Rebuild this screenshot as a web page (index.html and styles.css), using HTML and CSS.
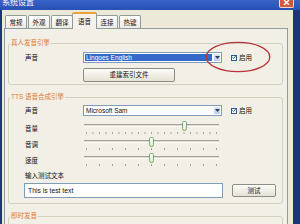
FILE: index.html
```html
<!DOCTYPE html>
<html lang="zh-CN">
<head>
<meta charset="utf-8">
<title>系统设置</title>
<link rel="stylesheet" href="styles.css">
</head>
<body>
<div class="titlebar">
  <span class="title">系统设置</span>
  <span class="close"><svg width="7" height="5" viewBox="0 0 7 5"><path d="M1 0 L6 5 M6 0 L1 5" stroke="#fff" stroke-width="1.4"/></svg></span>
</div>
<div class="frame">
  <div class="tabs">
    <div class="tab">常规</div>
    <div class="tab">外观</div>
    <div class="tab">翻译</div>
    <div class="tab active">语音</div>
    <div class="tab">连接</div>
    <div class="tab">热键</div>
  </div>
  <div class="panel">
    <fieldset class="group g1">
      <legend>真人发音引擎</legend>
      <div class="row">
        <span class="lbl">声音</span>
        <div class="combo sel"><span class="val">Lingoes English</span><span class="drop"><svg width="5" height="3" viewBox="0 0 5 3"><path d="M0 0 H5 L2.5 3 Z" fill="#2b3a55"/></svg></span></div>
        <span class="chk"><span class="box"><svg width="5" height="5" viewBox="0 0 5 5"><path d="M0.6 2.4 L2 3.8 L4.4 1" stroke="#2f7d32" stroke-width="1.2" fill="none"/></svg></span>启用</span>
      </div>
      <div class="row r-btn">
        <span class="lbl"></span>
        <span class="btn wide">重建索引文件</span>
      </div>
    </fieldset>

    <fieldset class="group g2">
      <legend>TTS 语音合成引擎</legend>
      <div class="row">
        <span class="lbl">声音</span>
        <div class="combo"><span class="val">Microsoft Sam</span><span class="drop"><svg width="5" height="3" viewBox="0 0 5 3"><path d="M0 0 H5 L2.5 3 Z" fill="#2b3a55"/></svg></span></div>
        <span class="chk"><span class="box"><svg width="5" height="5" viewBox="0 0 5 5"><path d="M0.6 2.4 L2 3.8 L4.4 1" stroke="#2f7d32" stroke-width="1.2" fill="none"/></svg></span>启用</span>
      </div>
      <div class="row srow first">
        <span class="lbl">音量</span>
        <div class="slider many"><div class="track"></div><div class="ticks"></div><span class="thumb" style="--v:0.75"></span></div>
      </div>
      <div class="row srow">
        <span class="lbl">音调</span>
        <div class="slider"><div class="track"></div><div class="ticks"></div><span class="thumb" style="--v:0.5"></span></div>
      </div>
      <div class="row srow">
        <span class="lbl">速度</span>
        <div class="slider"><div class="track"></div><div class="ticks"></div><span class="thumb" style="--v:0.5"></span></div>
      </div>
      <div class="row r-caption"><span>输入测试文本</span></div>
      <div class="row r-input">
        <div class="input">This is test text</div>
        <span class="btn test">测试</span>
      </div>
    </fieldset>

    <fieldset class="group g3">
      <legend>即时发音</legend>
    </fieldset>
  </div>
</div>
<svg class="mark" width="66" height="32" viewBox="0 0 66 32"><ellipse cx="33" cy="16" rx="31.8" ry="14.6" fill="none" stroke="#b8343c" stroke-width="1.3"/></svg>
</body>
</html>
```

FILE: styles.css
```css
* { box-sizing: border-box; }
html, body { margin: 0; padding: 0; }
body {
  position: relative;
  width: 300px;
  height: 224px;
  overflow: hidden;
  background: #ece9d8;
  font-family: "Liberation Sans", "Noto Sans CJK SC", sans-serif;
  font-size: 6.5px;
  color: #111;
}

.titlebar {
  height: 10px;
  background: linear-gradient(#3b63c6, #2550b5);
  display: flex;
  justify-content: space-between;
  align-items: flex-start;
  overflow: hidden;
}
.title {
  color: #fff;
  font-family: "Noto Sans CJK SC", sans-serif;
  font-size: 8px;
  line-height: 8px;
  margin: -2px 0 0 2px;
}
.close {
  width: 15px;
  height: 8px;
  margin-right: 6px;
  background: #cf5a3c;
  border: 1px solid #f1d7cf;
  border-top: 0;
  border-radius: 0 0 2px 2px;
  display: flex;
  justify-content: center;
  align-items: flex-start;
}

.frame {
  height: 214px;
  border-left: 2px solid #1c347a;
  border-right: 7px solid #1c347a;
  display: flex;
  flex-direction: column;
  overflow: hidden;
}

.tabs {
  display: flex;
  align-items: flex-end;
  height: 16px;
  flex: none;
  margin-top: 2px;
  padding-left: 3px;
}
.tab {
  width: 22px;
  height: 13px;
  margin-right: 1px;
  border: 1px solid #919b9c;
  border-bottom: 0;
  border-radius: 2px 2px 0 0;
  background: linear-gradient(#fefefe, #ecebe4);
  text-align: center;
  line-height: 12px;
  font-family: "Noto Sans CJK SC", sans-serif;
}
.tab.active {
  position: relative;
  z-index: 1;
  width: 25px;
  height: 17px;
  margin: 0 0 -1px -2px;
  border-top: 2px solid #eba13a;
  background: #f4f2ea;
  line-height: 14px;
}
.tab.active + .tab { margin-left: -1px; }

.panel {
  flex: 1;
  min-height: 0;
  overflow: hidden;
  margin: 0 5px 0 2px;
  border: 1px solid #919b9c;
  border-bottom: 0;
  background: #f1efe6;
  padding: 0 4px 0 3px;
}

.group {
  margin: 8px 0 0;
  border: 1px solid #d3d0c0;
  border-radius: 3px;
  padding: 4px 4px 5px 1px;
  min-width: 0;
}
.group legend {
  padding: 0 1px;
  font-size: 6.5px;
  line-height: 8px;
  color: #e07b30;
}
.g1 { margin-top: 10px; padding-top: 5px; padding-bottom: 2px; }
.g3 { height: 30px; }

.row {
  display: flex;
  align-items: center;
  margin-left: 15px;
}
.lbl { width: 58px; flex: none; line-height: 8px; }

.combo {
  width: 139px;
  height: 11px;
  border: 1px solid #7f9db9;
  background: #fff;
  display: flex;
  flex: none;
}
.combo .val {
  flex: 1;
  padding-left: 2px;
  line-height: 9px;
  white-space: nowrap;
}
.combo.sel .val {
  background: #3569c8;
  color: #fff;
  margin: 1px;
  line-height: 7px;
  padding-left: 1px;
}
.drop {
  width: 8px;
  flex: none;
  border: 1px solid #fff;
  background: linear-gradient(#dde7fc, #b9cdf6);
  display: flex;
  justify-content: center;
  align-items: center;
}

.chk {
  display: flex;
  align-items: center;
  margin-left: 9px;
  line-height: 8px;
}
.box {
  width: 6px;
  height: 6px;
  margin-right: 2px;
  border: 1px solid #2c5a8c;
  background: linear-gradient(#e6e6e0, #fff);
  display: flex;
  justify-content: center;
  align-items: center;
}

.btn {
  display: flex;
  justify-content: center;
  align-items: center;
  border: 1px solid #8e8d84;
  border-radius: 2px;
  background: linear-gradient(#fbfbf8, #e5e2d4);
  line-height: 8px;
}
.r-btn { margin-top: 5px; }
.wide { width: 92px; height: 14px; }

.srow { height: 16px; align-items: flex-start; }
.srow.first { margin-top: 3px; }
.srow .lbl { margin-top: 6px; }
.slider {
  position: relative;
  width: 135px;
  height: 16px;
  margin-left: 1px;
  padding-top: 5px;
}
.track {
  height: 3px;
  border-top: 1px solid #a4a296;
  border-bottom: 1px solid #ffffff;
  background: #dedbcc;
}
.ticks {
  height: 2px;
  margin: 5px 2px 0;
  background-image: linear-gradient(to right, #a6a499 1px, transparent 1px);
  background-repeat: repeat-x;
  background-size: calc((100% - 1px) / 10) 100%;
}
.many .ticks { background-size: calc((100% - 1px) / 20) 100%; }
.thumb {
  position: absolute;
  top: 2px;
  left: calc(var(--v) * (100% - 5px));
  width: 5px;
  height: 10px;
  border: 1px solid #73ad6e;
  border-radius: 2px 2px 3px 3px;
  background: linear-gradient(#ffffff, #e4e4dc);
}

.r-caption { margin-top: 5px; line-height: 8px; }
.r-input { margin-top: 3px; margin-left: 14px; }
.input {
  width: 199px;
  height: 15px;
  border: 1px solid #7f9db9;
  background: #fff;
  padding-left: 3px;
  line-height: 13px;
  font-size: 6.8px;
}
.test { width: 44px; height: 13px; margin-left: 9px; }

.mark {
  position: absolute;
  left: 205px;
  top: 41px;
}
```
